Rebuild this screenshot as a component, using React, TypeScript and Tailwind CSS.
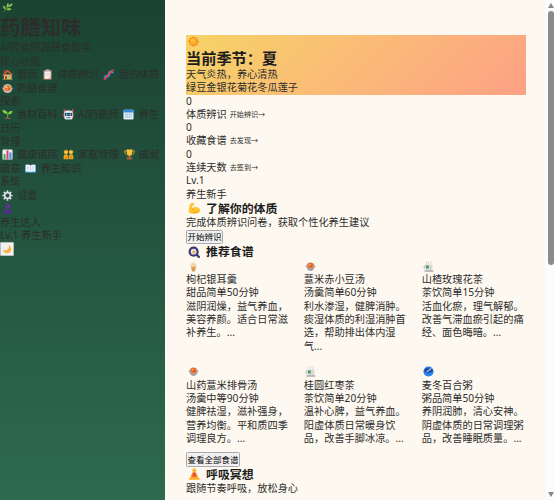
import type { ReactNode } from "react";

const icons: Record<string, ReactNode> = {
  leaf: (
    <>
      <path d="M1.5 11 6 6.5 10.5 2M4.5 8V4M5 7.5h4.5" stroke="#4f9a35" strokeWidth=".9" fill="none" />
      <path d="M5.8 6.3C4.6 4 5.5 2 6.6.8 8 2.4 7.500 5 5.800 6.300ZM7 5.600C7.600 3.200 9 2 11.500 1.700 11.300 4 9.600 5.600 7 5.600ZM3.800 8.200C1.700 7.400 1 5.800 1 4 3.200 4.500 4.200 6 3.800 8.200ZM5 8.200C6.500 6.700 8.600 6.600 10.500 7.600 9 9.400 6.800 9.700 5 8.200Z" fill="#86c954" />
    </>
  ),
  home: (
    <>
      <path d="M2 6h8.500v5.500H2Z" fill="#f2b25c" />
      <path d="M2.200 1h1.800v3H2.200Z" fill="#a84b32" />
      <path d="m6.200.8 5.600 5.600-1 .9-4.600-4.400-4.800 4.500L.4 6.500Z" fill="#e9573f" />
      <path d="M3.300 7.500h2v4h-2Z" fill="#8a4c36" />
      <path d="M6.700 7.300h2.400v2H6.700Z" fill="#6bbbe8" />
      <path d="M.8 10.500h1.800v1.200H.8ZM9.500 10.300h2v1.400h-2Z" fill="#63a845" />
    </>
  ),
  clipboard: (
    <>
      <rect x="1.500" y="1" width="9.200" height="10.700" rx=".8" fill="#a9714f" />
      <path d="M2.700 2.500h6.800v8.200H2.700Z" fill="#f4f2f6" />
      <path d="M4.200.4h3.800v2.200H4.200Z" fill="#b8b4c2" />
      <path d="M4 5h4.200M4 7h4.200" stroke="#c5bfd0" strokeWidth=".7" />
      <path d="m9.500 8.300-2.400 2.400h2.400Z" fill="#9f96ad" />
    </>
  ),
  dna: (
    <>
      <path d="M.8 9.200 3 11.500M2.600 7.400l2.600 2.300M6.500 3.500l2.300 2.800M9 1l2.300 2.500" stroke="#315cae" strokeWidth=".9" />
      <path d="M1.500 8.800C3 6.500 5 9.500 6.300 7.200S5.500 4 7.300 3 10.500 5 10.800 3.500" stroke="#3da5ee" strokeWidth="1.700" fill="none" />
      <path d="M.8 11c4.200.3 1.700-3.700 5-5S8 2 11.500 1.300" stroke="#e63e64" strokeWidth="1.900" fill="none" />
    </>
  ),
  stew: (
    <>
      <path d="M.5 6.200h11M2 8.800h8" stroke="#a39ca6" strokeWidth="2" />
      <circle cx="6" cy="6" r="4.900" fill="#c5bfc2" />
      <ellipse cx="6" cy="5.600" rx="3.600" ry="3.400" fill="#f27a35" />
      <circle cx="4.700" cy="4.600" r="1" fill="#ffe0a1" />
      <circle cx="7.500" cy="6.300" r=".9" fill="#c84727" />
      <path d="m6.600 4.200 1.500-.6" stroke="#68a64a" />
    </>
  ),
  soup: (
    <>
      <path d="M.3 5.300h11.400L9.300 9 7.500 10.600h-3L2.700 9Z" fill="#98989f" />
      <ellipse cx="6" cy="5.300" rx="4.500" ry="3.500" fill="#b9b4b6" />
      <circle cx="6" cy="4.800" r="3.200" fill="#ee6c2d" />
      <circle cx="5" cy="4" r=".8" fill="#ffc084" />
      <circle cx="7" cy="5.600" r=".7" fill="#b94328" />
    </>
  ),
  sprout: (
    <>
      <path d="M6 9.500C6.300 7 6.200 5.400 5.500 4.200M6.200 6c1.200-1 2-1.700 3.200-2" stroke="#55a630" strokeWidth="1.200" fill="none" />
      <path d="M6 5C2.500 5.500.8 4 .5 1 3.500.8 5.800 2 6 5ZM6.700 5.500c.2-2.600 2-3.700 4.800-3.300-.2 2.700-2 4-4.800 3.300Z" fill="#8bd144" />
      <path d="M2.500 11c1.200-2.800 6-2.800 7.300 0Z" fill="#8b5a44" />
    </>
  ),
  robot: (
    <>
      <path d="M.2 4.500h2v4h-2ZM9.800 4.500h2v4h-2Z" fill="#e4365d" />
      <path d="M1.500.3v3.500M10.500.3v3.500" stroke="#ef4266" strokeWidth="1.500" />
      <rect x="1.300" y="1.500" width="9.400" height="10" rx="2.800" fill="#dfe3ec" />
      <path d="M2 4.300h8v3.200H2Z" fill="#264765" />
      <path d="M3.300 5.200h1.500v1.500H3.300ZM7.200 5.200h1.500v1.500H7.200Z" fill="#7fe4ff" />
      <path d="M4 9.500h4" stroke="#59657b" />
    </>
  ),
  calendar: (
    <>
      <rect x=".5" y=".8" width="11" height="10.700" rx="1.200" fill="#e6eef7" />
      <path d="M.5 2Q.5.800 1.700.800h8.600q1.200 0 1.200 1.200v1.800H.5Z" fill="#2f8be0" />
      <path d="M2.200 6h7.600M2.200 8.700h7.600" stroke="#8eb9df" strokeWidth="1.400" strokeDasharray="1.400 .65" />
    </>
  ),
  chart: (
    <>
      <rect x=".5" y=".5" width="11" height="11" rx="1" fill="#edf0f4" />
      <path d="M1.700 5.500h2.200v5.500H1.700Z" fill="#32b455" />
      <path d="M4.900 1.500h2.200V11H4.900Z" fill="#ec3763" />
      <path d="M8.100 3.800h2.200V11H8.100Z" fill="#368eee" />
    </>
  ),
  family: (
    <>
      <path d="M.7 11.300V7.500Q.7 5.600 3.200 5.600t2.500 1.900v3.800ZM6.300 11.300V7.500q0-1.900 2.500-1.900t2.500 1.900v3.800Z" fill="#f2a51f" />
      <circle cx="3.300" cy="3.300" r="2.300" fill="#ffc83d" />
      <circle cx="8.700" cy="3.300" r="2.300" fill="#ffc83d" />
      <path d="M1 2.500Q3.300-.8 5.600 2.500M6.400 2.500Q8.700-.8 11 2.500" stroke="#aa6526" strokeWidth=".9" fill="none" />
      <path d="M2 9h2.600M7.400 9H10" stroke="#cf7822" strokeWidth="1.300" />
    </>
  ),
  trophy: (
    <>
      <path d="M3 2H.8C.8 5 2 6.300 4 6.500M9 2h2.200c0 3-1.200 4.300-3.200 4.500" stroke="#e7a52a" fill="none" />
      <path d="M2.800.5h6.400C9.300 4.500 8.500 7 6 7.500 3.500 7 2.700 4.500 2.800.5Z" fill="#ffc342" />
      <path d="M5.200 7h1.600v2.200H5.200Z" fill="#e9942c" />
      <path d="M3 9h6v2.500H3Z" fill="#a65b40" />
    </>
  ),
  book: (
    <>
      <path d="M0 2.500h12v8.200H0Z" fill="#3986cd" />
      <path d="M.7 1.800q3-.8 5.300.7 2.300-1.500 5.300-.7v7.700q-3-.5-5.300.7-2.300-1.200-5.300-.7Z" fill="#eff5fa" />
      <path d="M6 2.500v7.500M2 4.500h2.700M7.300 4.500H10M2 6.500h2.700M7.300 6.500H10" stroke="#adc4d7" strokeWidth=".7" />
    </>
  ),
  gear: (
    <>
      <path d="M6 .4v11.200M.4 6h11.200M2 2l8 8M10 2l-8 8" stroke="#dcdde5" strokeWidth="1.900" />
      <circle cx="6" cy="6" r="3.900" fill="#dcdde5" />
      <circle cx="6" cy="6" r="2.100" fill="#24523f" />
    </>
  ),
  person: (
    <>
      <ellipse cx="6" cy="3.700" rx="2.700" ry="3.300" fill="#59358a" />
      <path d="M5 6h2v2H5Z" fill="#59358a" />
      <path d="M1 11.500V10q.3-2.500 5-2.600 4.700.1 5 2.600v1.500Z" fill="#503080" />
    </>
  ),
  moon: <path d="M7.500.8c2.800 4-1.600 8.500-6.600 6.500C2 12.300 10.500 12.500 11 6.500 11.200 4 9.500 1.800 7.500.8Z" fill="#f6b33d" />,
  sun: (
    <>
      <path d="m6 .3 1.700 1.300 2.200.3.500 2.100L11.700 6l-1.300 1.800-.5 2.200-2.200.4L6 11.700l-1.800-1.300-2.200-.5-.4-2L.3 6l1.300-1.800L2 2.100l2.200-.5Z" fill="#f58220" />
      <circle cx="5.900" cy="5.900" r="3.900" fill="#ffad27" />
      <circle cx="5.200" cy="5" r="2.300" fill="#ffbd39" />
    </>
  ),
  muscle: (
    <>
      <path d="M.7 8.500C1 5 1.500 2 3 .9L5.500.800q1.200.9.200 2.200L4.200 3.500 4 6.300C5 4.800 7 4.300 8.500 5 11 5 12 7 11.500 9 10 11.700 3.500 11.800 1.300 10.500Q.6 9.700.7 8.500Z" fill="#ffc52f" />
      <path d="M3.700 6.300c.9.200 1.300.6 1.500 1.300M4.500 9.700q3 1.100 6-.5" stroke="#ed9820" strokeWidth=".8" fill="none" />
    </>
  ),
  search: (
    <>
      <path d="m8 8 3.200 3.200" stroke="#41366d" strokeWidth="2.200" />
      <circle cx="5.400" cy="5.400" r="4.900" fill="#41366d" />
      <circle cx="5.400" cy="5.400" r="2.800" fill="#dce7f5" />
      <circle cx="5.600" cy="5.700" r="1.400" fill="#ffac33" />
    </>
  ),
  cream: (
    <>
      <path d="M3.200 6h5.600L7.700 11.500H4.300Z" fill="#dc9b59" />
      <path d="M2.500 6.500C1.500 5 2.500 3.800 3.500 3.700 3.500 2 5.300 2 6 .7 7 1.500 8.500 2.200 8.300 3.700 10 4 10.200 5.500 9.300 6.500Z" fill="#f8dcb8" />
      <path d="M3.700 4.600 8 3.600M3 6.300l6-.9" stroke="#e8b98b" strokeWidth=".6" />
    </>
  ),
  tea: (
    <>
      <path d="M3.500 3V1.700L4.500.8M6 3V1.700L7 .8M8.500 3V1.700l1-.9" stroke="#a9abb0" strokeWidth=".6" fill="none" />
      <path d="M2.800 5.300H1.200v2.500h1.600" stroke="#a9acb3" strokeWidth=".9" fill="none" />
      <path d="M2.500 3.800h7.800v5Q10.300 10 9 10H4Q2.500 10 2.500 8.800Z" fill="#d5d9de" />
      <path d="M3.300 4.900h2.900v3.200H3.300Z" fill="#4b9a38" />
      <path d="M1.700 10.900h9.500" stroke="#888b94" strokeWidth="1.200" />
    </>
  ),
  porridge: (
    <>
      <circle cx="6" cy="6" r="5.500" fill="#2478e5" />
      <path d="M.8 6h10.400C10.800 9.500 9 11 6 11S1.200 9.500.8 6Z" fill="#2586ee" />
      <ellipse cx="6" cy="5" rx="4.700" ry="2.700" fill="#1d4eae" />
      <path d="M4.200 6.500 9 2.500" stroke="#d5dfef" strokeWidth="1.100" />
      <path d="m5.500 5.500 1.200-1" stroke="#ef9a3d" />
    </>
  ),
  meditate: (
    <>
      <circle cx="6" cy="2.200" r="1.900" fill="#ffb62e" />
      <path d="M4.300 4.300h3.400l2 4.500-1.200.4H3.500l-1.200-.4Z" fill="#f28a22" />
      <path d="M4.800 4.300h2.400L7.500 9h-3Z" fill="#ed4d39" />
      <path d="M1 9.500Q6 7.500 11 9.500v1.800H1Z" fill="#ffae24" />
    </>
  ),
};

function Icon({ name }: { name: string }) {
  return (
    <span className="inline-flex w-[14px] shrink-0 justify-center">
      <svg viewBox="0 0 12 12" className="size-[11px]">
        {icons[name]}
      </svg>
    </span>
  );
}

function NavItem({ icon, children }: { icon: string; children: string }) {
  return (
    <span className="flex items-center gap-[3px]">
      <Icon name={icon} />
      {children}
    </span>
  );
}

function NavRow({ children }: { children: ReactNode }) {
  return <div className="flex h-[13.6px] items-center gap-[3.3px]">{children}</div>;
}

const stats = [
  { label: "体质辨识", action: "开始辨识→" },
  { label: "收藏食谱", action: "去发现→" },
  { label: "连续天数", action: "去签到→" },
];

const recipes = [
  {
    icon: "cream",
    name: "枸杞银耳羹",
    meta: "甜品简单50分钟",
    lines: ["滋阴润燥，益气养血，", "美容养颜。适合日常滋", "补养生。..."],
  },
  {
    icon: "soup",
    name: "薏米赤小豆汤",
    meta: "汤羹简单60分钟",
    lines: ["利水渗湿，健脾消肿。", "痰湿体质的利湿消肿首", "选，帮助排出体内湿", "气..."],
  },
  {
    icon: "tea",
    name: "山楂玫瑰花茶",
    meta: "茶饮简单15分钟",
    lines: ["活血化瘀，理气解郁。", "改善气滞血瘀引起的痛", "经、面色晦暗。..."],
  },
  {
    icon: "soup",
    name: "山药薏米排骨汤",
    meta: "汤羹中等90分钟",
    lines: ["健脾祛湿，滋补强身，", "营养均衡。平和质四季", "调理良方。..."],
  },
  {
    icon: "tea",
    name: "桂圆红枣茶",
    meta: "茶饮简单20分钟",
    lines: ["温补心脾，益气养血。", "阳虚体质日常暖身饮", "品，改善手脚冰凉。..."],
  },
  {
    icon: "porridge",
    name: "麦冬百合粥",
    meta: "粥品简单50分钟",
    lines: ["养阴润肺，清心安神。", "阴虚体质的日常调理粥", "品，改善睡眠质量。..."],
  },
];

function Sidebar() {
  return (
    <aside className="w-[165px] shrink-0 bg-linear-to-b from-[#1b4332] to-[#2d6a4f] leading-[13.2px] text-[#2d2d2d]">
      <div className="flex h-[14px] items-center">
        <Icon name="leaf" />
      </div>
      <h1 className="h-[27.4px] text-[20.4px] leading-[27.4px] font-bold">药膳知味</h1>
      <p>AI药食同源膳食助手</p>
      <div>核心功能</div>
      <NavRow>
        <NavItem icon="home">首页</NavItem>
        <NavItem icon="clipboard">体质辨识</NavItem>
        <NavItem icon="dna">我的体质</NavItem>
      </NavRow>
      <NavRow>
        <NavItem icon="stew">药膳食谱</NavItem>
      </NavRow>
      <div>探索</div>
      <NavRow>
        <NavItem icon="sprout">食材百科</NavItem>
        <NavItem icon="robot">AI药膳师</NavItem>
        <NavItem icon="calendar">养生</NavItem>
      </NavRow>
      <div>日历</div>
      <div>管理</div>
      <NavRow>
        <NavItem icon="chart">健康追踪</NavItem>
        <NavItem icon="family">家庭管理</NavItem>
        <NavItem icon="trophy">成就</NavItem>
      </NavRow>
      <NavRow>
        <span>徽章</span>
        <NavItem icon="book">养生知识</NavItem>
      </NavRow>
      <div>系统</div>
      <NavRow>
        <NavItem icon="gear">设置</NavItem>
      </NavRow>
      <NavRow>
        <Icon name="person" />
      </NavRow>
      <div>养生达人</div>
      <div>Lv.1 养生新手</div>
      <button className="flex h-[14px] w-[14px] items-center justify-center rounded-[1px] border border-[#bcbcbc] bg-[#f0f0f0]">
        <svg viewBox="0 0 12 12" className="size-[10px] shrink-0">
          {icons.moon}
        </svg>
      </button>
    </aside>
  );
}

function SectionTitle({ icon, children }: { icon: string; children: string }) {
  return (
    <h2 className="flex h-[15.6px] items-center gap-[4px] text-[11.9px] leading-[15.6px] font-bold text-[#1c1c1c]">
      <span className="inline-flex w-[16px] shrink-0 justify-center">
        <svg viewBox="0 0 12 12" className="size-[12.5px]">
          {icons[icon]}
        </svg>
      </span>
      {children}
    </h2>
  );
}

function Scrollbar() {
  return (
    <div className="flex w-[9px] shrink-0 flex-col items-center bg-[#fcfcfc] py-[3px]">
      <svg viewBox="0 0 6 5" className="h-[5px] w-[6px] shrink-0">
        <path d="M3 0 6 5H0Z" fill="#858585" />
      </svg>
      <div className="mt-[3px] h-[254px] w-[6px] rounded-full bg-[#8b8b8b]" />
      <svg viewBox="0 0 6 5" className="mt-auto h-[5px] w-[6px] shrink-0">
        <path d="M0 0h6L3 5Z" fill="#858585" />
      </svg>
    </div>
  );
}

export default function App() {
  return (
    <div className="flex h-[500px] w-[555px] overflow-hidden bg-[#fef9f0] font-['Noto_Sans','Noto_Sans_CJK_SC',sans-serif] text-[10.2px] leading-[13.3px] whitespace-nowrap text-[#2d2d2d]">
      <Sidebar />
      <main className="min-w-0 flex-1 pt-[34.5px] pr-[20px] pl-[21px]">
        <section className="h-[60px] bg-linear-135 from-[#f6d365] to-[#fda085]">
          <div className="flex h-[13.6px] items-center">
            <Icon name="sun" />
          </div>
          <h2 className="h-[20px] text-[15.2px] leading-[21px] font-bold text-[#1c1c1c]">当前季节：夏</h2>
          <p>天气炎热，养心清热</p>
          <div>绿豆金银花菊花冬瓜莲子</div>
        </section>

        {stats.map((stat) => (
          <div key={stat.label}>
            <div>0</div>
            <div className="flex h-[13.3px] items-center gap-[3px]">
              <span>{stat.label}</span>
              <span className="font-['Noto_Sans_CJK_SC',sans-serif] text-[7.1px]">{stat.action}</span>
            </div>
          </div>
        ))}
        <div>Lv.1</div>
        <div>养生新手</div>

        <SectionTitle icon="muscle">了解你的体质</SectionTitle>
        <p>完成体质辨识问卷，获取个性化养生建议</p>
        <button className="flex h-[14.2px] items-center rounded-[1.5px] border border-[#a9a9a9] bg-[#f0f0f0] px-[0.5px] text-[8.5px] text-black">
          开始辨识
        </button>

        <SectionTitle icon="search">推荐食谱</SectionTitle>
        <div className="grid grid-cols-3 gap-x-[13.6px] gap-y-[12.1px]">
          {recipes.map((recipe) => (
            <article key={recipe.name}>
              <div className="flex h-[13.6px] items-center">
                <Icon name={recipe.icon} />
              </div>
              <h3>{recipe.name}</h3>
              <div>{recipe.meta}</div>
              {recipe.lines.map((line) => (
                <p key={line}>{line}</p>
              ))}
            </article>
          ))}
        </div>
        <button className="mt-[7px] flex h-[14.6px] items-center rounded-[1.5px] border border-[#a9a9a9] bg-[#f0f0f0] px-[0.5px] text-[8.5px] text-black">
          查看全部食谱
        </button>

        <SectionTitle icon="meditate">呼吸冥想</SectionTitle>
        <p>跟随节奏呼吸，放松身心</p>
      </main>
      <Scrollbar />
    </div>
  );
}
